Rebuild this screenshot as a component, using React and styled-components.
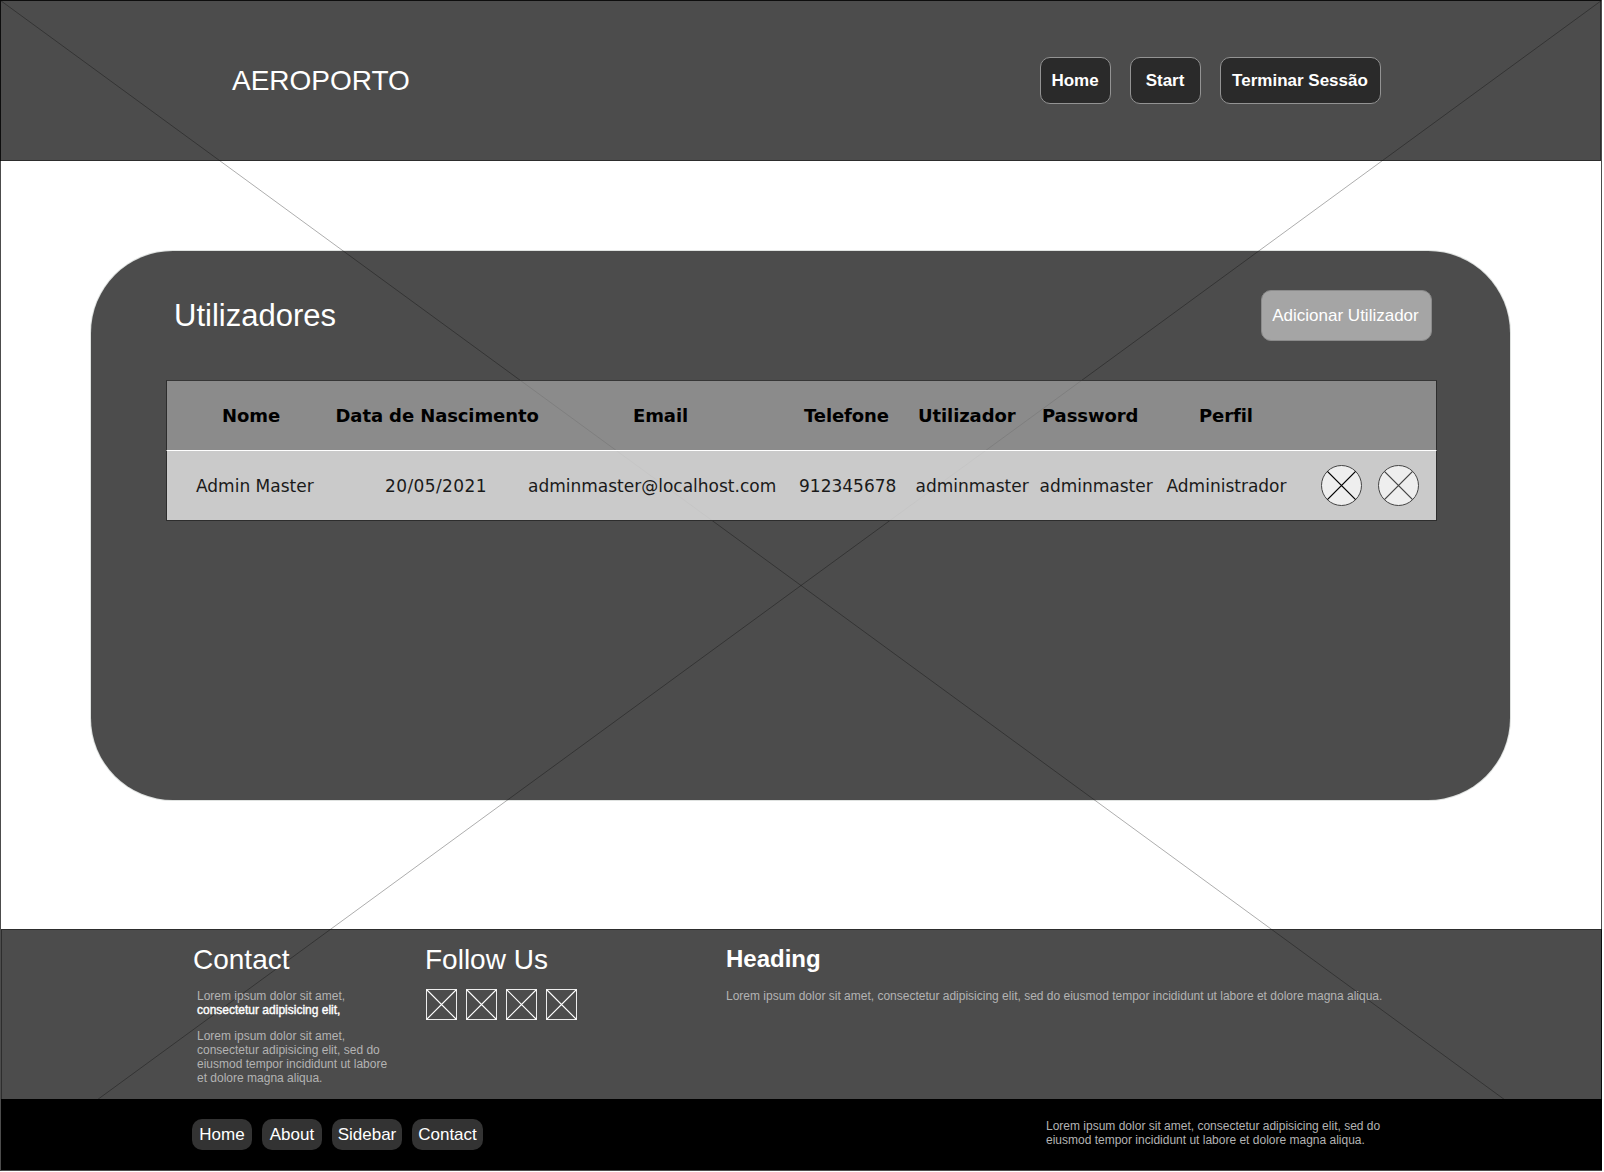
import React from "react";
import styled, { createGlobalStyle } from "styled-components";

const GlobalStyle = createGlobalStyle`
  * { box-sizing: border-box; }
  body { margin: 0; background: #fff; }
`;

const Page = styled.div`
  position: relative;
  width: 1602px;
  height: 1171px;
  display: flex;
  flex-direction: column;
  font-family: "Liberation Sans", Arial, sans-serif;
  color: #fff;
  overflow: hidden;
`;

const Overlay = styled.svg`
  position: absolute;
  left: 0;
  top: 0;
  pointer-events: none;
`;

const Header = styled.header`
  width: 1601px;
  height: 161px;
  flex: none;
  display: flex;
  align-items: center;
  justify-content: space-between;
  padding: 0 219px 0 231px;
  background: #4c4c4c;
  border: 1px solid #2d2d2d;
`;

const Brand = styled.div`
  font-size: 28px;
  line-height: 34px;
`;

const HeaderNav = styled.nav`
  display: flex;
  gap: 19px;
`;

const HeaderButton = styled.button`
  width: ${(p) => p.$width}px;
  height: 47px;
  padding: 0 1px 0 0;
  border: 1px solid #939393;
  border-radius: 10px;
  background: #2a2a2a;
  color: #fff;
  font: bold 17px "Liberation Sans", Arial, sans-serif;
  white-space: nowrap;
`;

const Main = styled.main`
  height: 768px;
  flex: none;
  padding: 90px 92px 0 91px;
`;

const Panel = styled.section`
  height: 549px;
  padding: 39px 73px 0 75px;
  border-radius: 82px;
  background: #4c4c4c;
  box-shadow: 0 0 0 1px #dfe2e0;
`;

const PanelHead = styled.div`
  display: flex;
  justify-content: space-between;
  align-items: center;
  height: 51px;
  padding: 0 5px 0 8px;
`;

const PanelTitle = styled.h1`
  margin: 0;
  font-size: 31px;
  font-weight: 400;
`;

const AddButton = styled.button`
  width: 171px;
  height: 51px;
  padding: 0 2px 0 0;
  border: 1px solid #8b8b8b;
  border-radius: 10px;
  background: #a5a5a5;
  color: #fff;
  font: 17px "Liberation Sans", Arial, sans-serif;
  white-space: nowrap;
`;

const Table = styled.div`
  position: relative;
  z-index: 1;
  margin-top: 39px;
  height: 141px;
  font-family: Verdana, "DejaVu Sans", sans-serif;
  font-variant-ligatures: none;
  color: #000;
`;

const Row = styled.div`
  display: grid;
  align-items: center;
  white-space: nowrap;
  background-clip: padding-box;
  border: 1px solid #2d2d2d;
`;

const HeadRow = styled(Row)`
  grid-template-columns: 113.5px 297.5px 171px 114px 124px 157px 1fr;
  height: 70px;
  padding-left: 55px;
  background-color: rgba(202, 202, 202, 0.5);
  border-top-color: #363636;
  border-bottom: 0;
  font-size: 18px;
  font-weight: 700;
  letter-spacing: -0.1px;
`;

const BodyRow = styled(Row)`
  grid-template-columns: 189px 143px 271px 116.5px 124px 127px 154.5px 1fr;
  height: 71px;
  padding-left: 29px;
  background-color: rgba(227, 227, 227, 0.83);
  border-top-color: #fff;
  font-size: 17px;
  color: #1a1a1a;
`;

const DateText = styled.div`
  letter-spacing: 0.4px;
`;

const Actions = styled.div`
  display: flex;
  gap: 16px;
`;

const Footer = styled.footer`
  height: 170px;
  margin-left: 1px;
  flex: none;
  display: grid;
  grid-template-columns: 232px 301px 1fr;
  padding: 12px 0 0 191px;
  background: #4c4c4c;
  border: solid #2d2d2d;
  border-width: 1px 1px 0;
`;

const FooterColumn = styled.div`
  position: relative;
  z-index: 1;
`;

const FooterTitle = styled.h2`
  margin: 0;
  height: 34px;
  font-size: ${(p) => (p.$bold ? 24 : 28)}px;
  font-weight: ${(p) => (p.$bold ? 700 : 400)};
  line-height: ${(p) => (p.$bold ? 34 : 36)}px;
`;

const SmallText = styled.p`
  margin: ${(p) => p.$top}px 0 0 ${(p) => p.$indent || 0}px;
  width: ${(p) => p.$width}px;
  font-size: 12px;
  line-height: 14px;
  color: #b3b3b3;
`;

const Highlight = styled.span`
  color: #fff;
  -webkit-text-stroke: 0.4px #fff;
`;

const Socials = styled.div`
  display: flex;
  gap: 9px;
  margin: 13px 0 0 1px;
`;

const BottomBar = styled.div`
  height: 71px;
  margin-left: 1px;
  flex: none;
  display: flex;
  justify-content: space-between;
  align-items: flex-start;
  padding: 20px 206px 0 191px;
  background: #000;
`;

const BottomNav = styled.nav`
  display: flex;
  gap: 10px;
`;

const BottomLink = styled.button`
  width: ${(p) => p.$width}px;
  height: 31px;
  padding: 0;
  border: 0;
  border-radius: 10px;
  background: #333;
  color: #fff;
  font: 17px "Liberation Sans", Arial, sans-serif;
`;

function RoundIcon({ stroke }) {
  return (
    <svg width="41" height="41" viewBox="0 0 41 41" fill="none">
      <circle cx="20.5" cy="20.5" r="20" fill="#eee" stroke="#444" strokeWidth="1" />
      <path d="M6.4 6.4 34.6 34.6M34.6 6.4 6.4 34.6" stroke={stroke} strokeWidth="1.3" />
    </svg>
  );
}

function SquareIcon() {
  return (
    <svg width="31" height="31" viewBox="0 0 31 31" fill="none" stroke="#fff">
      <rect x="0.5" y="0.5" width="30" height="30" strokeOpacity="0.9" />
      <path d="M0.5 0.5 30.5 30.5M30.5 0.5 0.5 30.5" strokeWidth="1.15" />
    </svg>
  );
}

const columns = ["Nome", "Data de Nascimento", "Email", "Telefone", "Utilizador", "Password", "Perfil"];

export default function App() {
  return (
    <Page>
      <GlobalStyle />
      <Header>
        <Brand>AEROPORTO</Brand>
        <HeaderNav>
          <HeaderButton $width={71}>Home</HeaderButton>
          <HeaderButton $width={71}>Start</HeaderButton>
          <HeaderButton $width={161}>Terminar Sessão</HeaderButton>
        </HeaderNav>
      </Header>
      <Main>
        <Panel>
          <PanelHead>
            <PanelTitle>Utilizadores</PanelTitle>
            <AddButton>Adicionar Utilizador</AddButton>
          </PanelHead>
          <Table>
            <HeadRow>
              {columns.map((c) => <div key={c}>{c}</div>)}
            </HeadRow>
            <BodyRow>
              <div>Admin Master</div>
              <DateText>20/05/2021</DateText>
              <div>adminmaster@localhost.com</div>
              <div>912345678</div>
              <div>adminmaster</div>
              <div>adminmaster</div>
              <div>Administrador</div>
              <Actions>
                <RoundIcon stroke="#000" />
                <RoundIcon stroke="#444" />
              </Actions>
            </BodyRow>
          </Table>
        </Panel>
      </Main>
      <Footer>
        <FooterColumn>
          <FooterTitle>Contact</FooterTitle>
          <SmallText $top={13} $indent={4} $width={200}>
            Lorem ipsum dolor sit amet,<br /><Highlight>consectetur adipisicing elit,</Highlight>
          </SmallText>
          <SmallText $top={12} $indent={4} $width={200}>
            Lorem ipsum dolor sit amet, consectetur adipisicing elit, sed do eiusmod tempor incididunt ut labore et dolore magna aliqua.
          </SmallText>
        </FooterColumn>
        <FooterColumn>
          <FooterTitle>Follow Us</FooterTitle>
          <Socials>
            <SquareIcon /><SquareIcon /><SquareIcon /><SquareIcon />
          </Socials>
        </FooterColumn>
        <FooterColumn>
          <FooterTitle $bold>Heading</FooterTitle>
          <SmallText $top={13} $width={700}>
            Lorem ipsum dolor sit amet, consectetur adipisicing elit, sed do eiusmod tempor incididunt ut labore et dolore magna aliqua.
          </SmallText>
        </FooterColumn>
      </Footer>
      <Overlay width="1602" height="1171" fill="none" stroke="#000">
        <rect x="0.5" y="0.5" width="1601" height="1170" strokeOpacity="0.7" />
        <path d="M0.5 0.5 1601.5 1170.5M1601.5 0.5 0.5 1170.5" strokeOpacity="0.32" />
      </Overlay>
      <BottomBar>
        <BottomNav>
          <BottomLink $width={60}>Home</BottomLink>
          <BottomLink $width={60}>About</BottomLink>
          <BottomLink $width={70}>Sidebar</BottomLink>
          <BottomLink $width={71}>Contact</BottomLink>
        </BottomNav>
        <SmallText $top={0} $width={350}>
          Lorem ipsum dolor sit amet, consectetur adipisicing elit, sed do eiusmod tempor incididunt ut labore et dolore magna aliqua.
        </SmallText>
      </BottomBar>
    </Page>
  );
}
